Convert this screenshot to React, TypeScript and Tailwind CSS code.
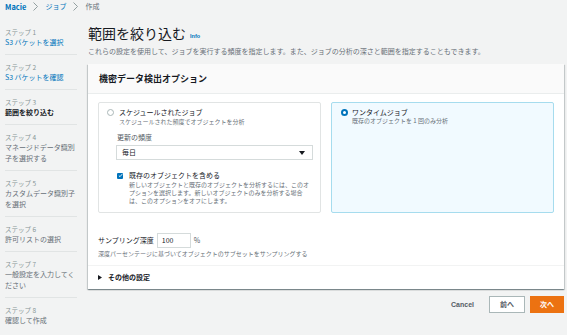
import React from "react";

const steps: { n: number; lines: string[]; kind: "link" | "current" | "muted" }[] = [
  { n: 1, lines: ["S3 バケットを選択"], kind: "link" },
  { n: 2, lines: ["S3 バケットを確認"], kind: "link" },
  { n: 3, lines: ["範囲を絞り込む"], kind: "current" },
  { n: 4, lines: ["マネージドデータ識別", "子を選択する"], kind: "muted" },
  { n: 5, lines: ["カスタムデータ識別子", "を選択"], kind: "muted" },
  { n: 6, lines: ["許可リストの選択"], kind: "muted" },
  { n: 7, lines: ["一般設定を入力してく", "ださい"], kind: "muted" },
  { n: 8, lines: ["確認して作成"], kind: "muted" },
];

function Chevron() {
  return (
    <svg width="5" height="9" viewBox="0 0 5 9" className="mx-[7px]">
      <path d="M0.5 0.5 L4.5 4.5 L0.5 8.5" fill="none" stroke="#879596" strokeWidth="0.9" />
    </svg>
  );
}

export default function App() {
  return (
    <div className="w-[567px] h-[335px] overflow-hidden bg-[#f2f3f3] font-['Noto_Sans_CJK_JP','Noto_Sans',sans-serif] text-[#16191f]">
      {/* breadcrumb */}
      <div className="h-[20px] pl-[5px]">
        <div className="h-[13px] flex items-center text-[7px] leading-[9px]">
          <span className="text-[#0073bb] font-bold text-[7.5px]">Macie</span>
          <Chevron />
          <span className="text-[#0073bb]">ジョブ</span>
          <Chevron />
          <span className="text-[#687078]">作成</span>
        </div>
      </div>

      <div className="flex">
        {/* nav */}
        <div className="w-[72px] ml-[5px] shrink-0">
          {steps.map((s, i) => (
            <div
              key={s.n}
              className={
                "pt-[7px] pb-[6px] " +
                (i < steps.length - 1 ? "border-b border-[#e1e4e4]" : "")
              }
            >
              <div className="text-[6.5px] leading-[10px] text-[#879596]">ステップ {s.n}</div>
              {s.lines.map((l) => (
                <div
                  key={l}
                  className={
                    "text-[7px] leading-[11px] whitespace-nowrap " +
                    (s.kind === "link"
                      ? "text-[#0073bb]"
                      : s.kind === "current"
                      ? "font-bold text-[#16191f]"
                      : "text-[#687078]")
                  }
                >
                  {l}
                </div>
              ))}
            </div>
          ))}
        </div>

        {/* main */}
        <div className="ml-[11px] w-[476px] shrink-0">
          <div className="mt-[4px] flex items-center h-[18px]">
            <span className="text-[14px] leading-[18px] text-[#16191f]">範囲を絞り込む</span>
            <span className="ml-[4px] mt-[6px] text-[5.5px] leading-[7px] font-bold text-[#0073bb] font-['Liberation_Sans',sans-serif]">
              Info
            </span>
          </div>
          <div className="mt-[4px] text-[7px] leading-[10px] text-[#687078] whitespace-nowrap">
            これらの設定を使用して、ジョブを実行する頻度を指定します。また、ジョブの分析の深さと範囲を指定することもできます。
          </div>

          {/* card */}
          <div className="mt-[8px] bg-white shadow-[0_1px_1px_0_rgba(0,28,36,0.3),1px_1px_1px_0_rgba(0,28,36,0.15),-1px_1px_1px_0_rgba(0,28,36,0.15)]">
            <div className="h-[30px] flex items-center pl-[11px] bg-[#fafafa] border-b border-[#eaeded]">
              <span className="text-[9px] font-bold leading-[12px]">機密データ検出オプション</span>
            </div>

            <div className="pt-[8px] px-[10px] pb-[7px]">
              <div className="grid grid-cols-2 gap-[10px] h-[111px]">
                {/* left tile */}
                <div className="border border-[#e1e4e4] rounded-[2px] pt-[5px] pl-[8px]">
                  <div className="flex items-start">
                    <div className="mt-[1px] w-[7px] h-[7px] rounded-full border border-[#aab7b8] bg-white shrink-0" />
                    <div className="ml-[5px]">
                      <div className="text-[7px] leading-[9px] text-[#16191f]">スケジュールされたジョブ</div>
                      <div className="text-[6px] leading-[9px] text-[#687078]">スケジュールされた頻度でオブジェクトを分析</div>
                    </div>
                  </div>
                  <div className="ml-[9px]">
                    <div className="mt-[6px] pl-[1px] text-[7px] leading-[10px] text-[#545b64]">更新の頻度</div>
                    <div className="mt-[3px] w-[197px] h-[15px] border border-[#d5dbdb] flex items-center justify-between pl-[5px] pr-[7px]">
                      <span className="text-[7px] leading-[9px]">毎日</span>
                      <svg width="6" height="4" viewBox="0 0 6 4">
                        <path d="M0 0 L6 0 L3 4 Z" fill="#16191f" />
                      </svg>
                    </div>
                    <div className="mt-[11px] flex items-start">
                      <div className="ml-[1px] mt-[1.5px] w-[6px] h-[6px] rounded-[1px] bg-[#0073bb] flex items-center justify-center shrink-0">
                        <svg width="5" height="5" viewBox="0 0 5 5">
                          <path d="M0.9 2.6 L2 3.7 L4.2 1.1" fill="none" stroke="white" strokeWidth="0.9" />
                        </svg>
                      </div>
                      <div className="ml-[6px]">
                        <div className="text-[7px] leading-[9px] text-[#16191f]">既存のオブジェクトを含める</div>
                        <div className="mt-[1px] text-[6px] leading-[8px] text-[#687078] whitespace-nowrap">
                          新しいオブジェクトと既存のオブジェクトを分析するには、このオ
                          <br />
                          プションを選択します。新しいオブジェクトのみを分析する場合
                          <br />
                          は、このオプションをオフにします。
                        </div>
                      </div>
                    </div>
                  </div>
                </div>

                {/* right tile */}
                <div className="border border-[#a6dcee] bg-[#f1faff] rounded-[2px] pt-[5px] pl-[9px]">
                  <div className="flex items-start">
                    <div className="mt-[1px] w-[7px] h-[7px] rounded-full border-[2px] border-[#0073bb] bg-white shrink-0" />
                    <div className="ml-[4px]">
                      <div className="text-[7px] leading-[9px] text-[#16191f]">ワンタイムジョブ</div>
                      <div className="text-[6px] leading-[8px] text-[#687078]">既存のオブジェクトを 1 回のみ分析</div>
                    </div>
                  </div>
                </div>
              </div>

              {/* sampling */}
              <div className="mt-[20px] flex items-center h-[15px]">
                <span className="text-[7px] leading-[9px] text-[#16191f]">サンプリング深度</span>
                <div className="ml-[3px] w-[34px] h-[15px] border border-[#d5dbdb] bg-white flex items-center pl-[4px]">
                  <span className="text-[7px] leading-[9px]">100</span>
                </div>
                <span className="ml-[3px] text-[7px] leading-[9px] text-[#545b64]">%</span>
              </div>
              <div className="mt-[2px] text-[6px] leading-[8px] text-[#687078]">
                深度パーセンテージに基づいてオブジェクトのサブセットをサンプリングする
              </div>
            </div>

            <div className="h-[24px] border-t border-[#f2f3f3] flex items-center pl-[10px]">
              <svg width="4" height="5" viewBox="0 0 4 5">
                <path d="M0 0 L4 2.5 L0 5 Z" fill="#16191f" />
              </svg>
              <span className="ml-[6px] text-[7px] leading-[9px] font-bold">その他の設定</span>
            </div>
          </div>

          {/* buttons */}
          <div className="mt-[7px] flex justify-end items-center">
            <span className="text-[7px] leading-[9px] font-bold text-[#545b64] font-['Liberation_Sans',sans-serif]">Cancel</span>
            <div className="ml-[15px] w-[36px] h-[17px] border border-[#aab7b8] bg-white flex items-center justify-center">
              <span className="text-[7px] leading-[9px] font-bold text-[#545b64]">前へ</span>
            </div>
            <div className="ml-[5px] w-[34px] h-[17px] bg-[#ec7211] flex items-center justify-center">
              <span className="text-[7px] leading-[9px] font-bold text-white">次へ</span>
            </div>
          </div>
        </div>
      </div>
    </div>
  );
}
